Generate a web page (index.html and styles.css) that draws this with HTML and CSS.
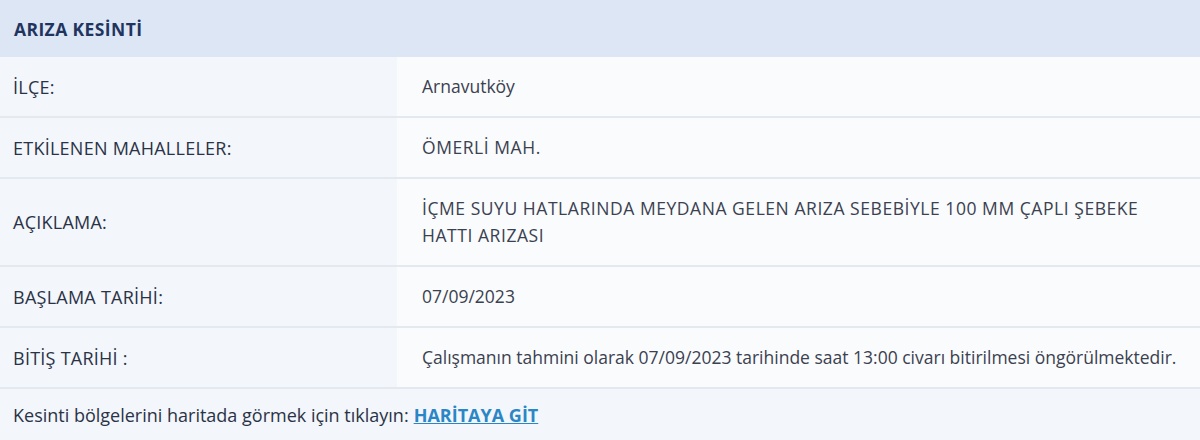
FILE: index.html
```html
<!DOCTYPE html>
<html lang="tr">
<head>
<meta charset="utf-8">
<link rel="stylesheet" href="styles.css">
</head>
<body>
<div class="card">
  <div class="head">ARIZA KESİNTİ</div>
  <div class="row"><div class="lbl">İLÇE:</div><div class="val">Arnavutköy</div></div>
  <div class="row"><div class="lbl">ETKİLENEN MAHALLELER:</div><div class="val caps">ÖMERLİ MAH.</div></div>
  <div class="row tall"><div class="lbl">AÇIKLAMA:</div><div class="val caps">İÇME SUYU HATLARINDA MEYDANA GELEN ARIZA SEBEBİYLE 100 MM ÇAPLI ŞEBEKE HATTI ARIZASI</div></div>
  <div class="row"><div class="lbl">BAŞLAMA TARİHİ:</div><div class="val">07/09/2023</div></div>
  <div class="row"><div class="lbl">BİTİŞ TARİHİ :</div><div class="val">Çalışmanın tahmini olarak 07/09/2023 tarihinde saat 13:00 civarı bitirilmesi öngörülmektedir.</div></div>
  <div class="foot">Kesinti bölgelerini haritada görmek için tıklayın: <a href="#" class="link">HARİTAYA GİT</a></div>
</div>
</body>
</html>
```
FILE: styles.css
```css
* { box-sizing: border-box; }
html, body { margin: 0; padding: 0; }
body {
  width: 1200px;
  height: 440px;
  overflow: hidden;
  background: #f3f6fb;
  font-family: "Open Sans", "Liberation Sans", sans-serif;
  font-size: 17.5px;
  color: #2c3548;
}
.card { display: flex; flex-direction: column; }
.head {
  height: 57px;
  background: #dde6f5;
  color: #1f3560;
  font-weight: 700;
  font-size: 17.5px;
  letter-spacing: 0.4px;
  padding: 0 14px;
  display: flex;
  align-items: center;
}
.row {
  display: grid;
  grid-template-columns: 397px 1fr;
  min-height: 61px;
  border-bottom: 2px solid #e4e8ef;
}
.row.tall { min-height: 88px; }
.lbl {
  background: #f3f6fb;
  padding: 0 13px;
  display: flex;
  align-items: center;
  color: #2a3346;
  font-size: 18px;
  letter-spacing: 0.25px;
}
.val {
  background: #fafbfd;
  padding: 0 14px 0 25px;
  display: flex;
  align-items: center;
  line-height: 27px;
  color: #3a4150;
}
.val.caps { letter-spacing: 0.55px; }
.foot {
  height: 52px;
  display: flex;
  align-items: center;
  padding: 0 13px;
  color: #2a3346;
  font-size: 18px;
  gap: 5px;
}
.link {
  color: #2b86c5;
  font-weight: 700;
  text-decoration: underline;
}
```
